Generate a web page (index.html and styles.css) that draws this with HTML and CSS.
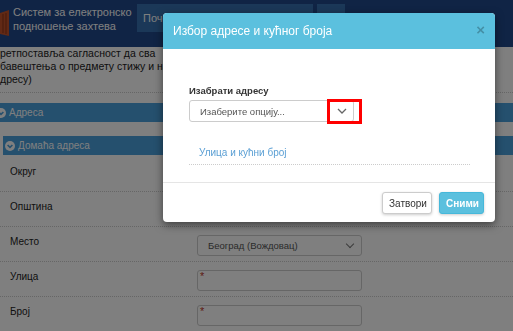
FILE: index.html
```html
<!DOCTYPE html>
<html lang="sr">
<head>
    <meta charset="UTF-8">
    <meta name="viewport" content="width=device-width, initial-scale=1.0">
    <title>Систем за електронско подношење захтева</title>
    <link rel="stylesheet" href="styles.css">
</head>
<body>
    <header class="topbar">
        <div class="brand">
            <svg class="brand-logo" width="9" height="26" viewBox="0 0 9 26">
                <path d="M0 3 L9 0 L9 26 L0 24 Z" fill="#c2532a"/>
                <path d="M3 4 V23 M6 3 V24" stroke="#8a3418" stroke-width="1"/>
            </svg>
            <div class="brand-name">Систем за електронско<br>подношење захтева</div>
        </div>
        <nav class="topnav">
            <a class="topnav-item topnav-home" href="#">Почетна страна</a>
            <a class="topnav-item topnav-small" href="#"></a>
        </nav>
    </header>

    <main class="content">
        <p class="consent">ретпоставља сагласност да сва<br>бавештења о предмету стижу и на ову<br>дресу)</p>

        <div class="section-bar">
            <svg class="bar-icon" width="10" height="10" viewBox="0 0 10 10">
                <circle cx="5" cy="5" r="5" fill="#fff"/>
                <path d="M2.6 4 L5 6.4 L7.4 4" fill="none" stroke="#4aa0dc" stroke-width="1.6"/>
            </svg>
            Адреса
        </div>
        <div class="section-bar sub-bar">
            <svg class="bar-icon" width="10" height="10" viewBox="0 0 10 10">
                <circle cx="5" cy="5" r="5" fill="#fff"/>
                <path d="M2.6 4 L5 6.4 L7.4 4" fill="none" stroke="#4aa0dc" stroke-width="1.6"/>
            </svg>
            Домаћа адреса
        </div>

        <div class="form-row">
            <label class="row-label">Округ</label>
            <div class="field select-field"><span>Град Београд</span><span class="chevron"></span></div>
        </div>
        <div class="form-row">
            <label class="row-label">Општина</label>
            <div class="field select-field"><span>Вождовац</span><span class="chevron"></span></div>
        </div>
        <div class="form-row">
            <label class="row-label">Место</label>
            <div class="field select-field"><span>Београд (Вождовац)</span><span class="chevron"></span></div>
        </div>
        <div class="form-row">
            <label class="row-label">Улица</label>
            <div class="field text-field"><span class="required">*</span></div>
        </div>
        <div class="form-row">
            <label class="row-label">Број</label>
            <div class="field text-field"><span class="required">*</span></div>
        </div>
    </main>

    <div class="backdrop"></div>

    <div class="modal">
        <div class="modal-header">
            <h4 class="modal-title">Избор адресе и кућног броја</h4>
            <span class="modal-close">&times;</span>
        </div>
        <div class="modal-body">
            <label class="modal-label">Изабрати адресу</label>
            <div class="picker">
                <div class="picker-box">
                    <span>Изаберите опцију...</span>
                    <svg width="10" height="6" viewBox="0 0 10 6">
                        <path d="M1 1 L5 5 L9 1" fill="none" stroke="#666" stroke-width="1.3"/>
                    </svg>
                </div>
                <div class="highlight"></div>
            </div>
            <div class="address-link"><a href="#">Улица и кућни број</a></div>
        </div>
        <div class="modal-footer">
            <button class="btn btn-default">Затвори</button>
            <button class="btn btn-info">Сними</button>
        </div>
    </div>
</body>
</html>
```

FILE: styles.css
```css
body {
    margin: 0;
    font-family: 'Liberation Sans', Arial, sans-serif;
    font-size: 10px;
    color: #333;
    background-color: #fff;
    overflow: hidden;
}
.topbar {
    height: 47px;
    background-color: #20488a;
    display: flex;
    align-items: flex-start;
}
.brand {
    width: 137px;
    display: flex;
    align-items: flex-start;
}
.brand-logo {
    margin-top: 10px;
    flex: none;
}
.brand-name {
    margin-left: 4px;
    margin-top: 5px;
    font-size: 11px;
    line-height: 14px;
    color: #fff;
    white-space: nowrap;
}
.topnav {
    display: flex;
    gap: 4px;
    margin-top: 4px;
}
.topnav-item {
    height: 28px;
    line-height: 28px;
    background-color: #3670b0;
    color: #fff;
    font-size: 11px;
    text-decoration: none;
}
.topnav-home {
    width: 170px;
    padding-left: 6px;
}
.topnav-small {
    width: 28px;
}
.consent {
    margin: 0;
    padding: 0 0 6px 0;
    font-size: 10.5px;
    line-height: 13px;
    color: #222;
    border-bottom: 1px dotted #ccc;
}
.section-bar {
    margin-top: 10px;
    height: 19px;
    background-color: #4aa0dc;
    color: #fff;
    display: flex;
    align-items: center;
    gap: 3px;
    margin-left: -4px;
}
.sub-bar {
    margin-top: 14px;
    margin-left: 3px;
    padding-left: 2px;
}
.bar-icon {
    flex: none;
}
.form-row {
    display: grid;
    grid-template-columns: 197px 165px;
    padding: 8px 0 5px;
    border-bottom: 1px dotted #ccc;
}
.sub-bar + .form-row {
    margin-top: 2px;
}
.row-label {
    padding-left: 10px;
    line-height: 13px;
    color: #222;
}
.field {
    height: 21px;
    box-sizing: border-box;
    border: 1px solid #ccc;
    border-radius: 3px;
    background-color: #fff;
}
.select-field {
    display: flex;
    align-items: center;
    justify-content: space-between;
    padding: 0 8px 0 10px;
    font-size: 9.5px;
    color: #555;
}
.chevron {
    width: 5px;
    height: 5px;
    border-right: 1.3px solid #777;
    border-bottom: 1.3px solid #777;
    transform: rotate(45deg);
    margin-bottom: 3px;
}
.text-field {
    padding-left: 2px;
}
.required {
    color: #c0392b;
    font-size: 11px;
    line-height: 9px;
}
.backdrop {
    position: fixed;
    inset: 0;
    background-color: rgba(0, 0, 0, 0.5);
}
.modal {
    position: fixed;
    top: 13px;
    left: 163px;
    width: 332px;
    background-color: #fff;
    border-radius: 4px;
    box-shadow: 0 3px 9px rgba(0, 0, 0, 0.5);
    overflow: hidden;
}
.modal-header {
    height: 36px;
    background-color: #5bc0de;
    display: flex;
    align-items: center;
    justify-content: space-between;
    padding: 0 10px;
}
.modal-title {
    margin: 0;
    font-size: 12px;
    font-weight: normal;
    color: #fff;
}
.modal-close {
    font-size: 15px;
    font-weight: bold;
    color: #000;
    opacity: 0.25;
    margin-top: -3px;
}
.modal-body {
    padding: 35px 25px 17px 26px;
}
.modal-label {
    display: block;
    font-size: 9.5px;
    font-weight: bold;
    line-height: 13px;
    margin-bottom: 3px;
    color: #333;
}
.picker {
    position: relative;
    width: 165px;
}
.picker-box {
    height: 22px;
    box-sizing: border-box;
    border: 1px solid #ccc;
    border-radius: 3px;
    display: flex;
    align-items: center;
    justify-content: space-between;
    padding: 0 6px 0 10px;
    font-size: 9.5px;
    color: #555;
}
.highlight {
    position: absolute;
    left: 138px;
    top: -1px;
    width: 35px;
    height: 25px;
    box-sizing: border-box;
    border: 3px solid #f00;
}
.address-link {
    margin-top: 24px;
    padding: 0 0 5px 10px;
    line-height: 13px;
    border-bottom: 1px dotted #ccc;
}
.address-link a {
    color: #5a9fd4;
    text-decoration: none;
}
.modal-footer {
    border-top: 1px solid #e5e5e5;
    padding: 9px 11px 8px;
    display: flex;
    justify-content: flex-end;
    gap: 7px;
}
.btn {
    height: 22px;
    font-family: inherit;
    font-size: 10px;
    border-radius: 3px;
    cursor: pointer;
}
.btn-default {
    width: 50px;
    background-color: #fff;
    border: 1px solid #ccc;
    color: #333;
    box-shadow: 0 1px 3px rgba(0, 0, 0, 0.2);
}
.btn-info {
    width: 45px;
    background-color: #5bc0de;
    border: 1px solid #46b8da;
    color: #fff;
    font-weight: bold;
    box-shadow: 0 1px 3px rgba(0, 0, 0, 0.2);
}
```
